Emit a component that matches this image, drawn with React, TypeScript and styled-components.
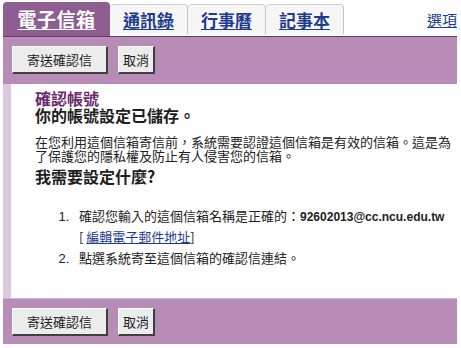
import React from 'react';
import styled, { createGlobalStyle } from 'styled-components';

const GlobalStyle = createGlobalStyle`
  html, body {
    margin: 0;
    padding: 0;
    background: #ffffff;
  }
  body {
    font-family: "Liberation Sans", "Noto Sans CJK TC", sans-serif;
    color: #222222;
  }
`;

const CJK = `"Noto Sans CJK TC", "Liberation Sans", sans-serif`;

const Frame = styled.div`
  width: 454px;
  margin-left: 3px;
`;

const TabBar = styled.div`
  display: flex;
  align-items: flex-start;
  height: 36px;
  padding-top: 2px;
  box-sizing: border-box;
`;

const Tab = styled.a<{ $active?: boolean }>`
  box-sizing: border-box;
  display: flex;
  align-items: center;
  justify-content: center;
  font-family: ${CJK};
  font-weight: 700;
  text-decoration: underline;
  text-underline-offset: 2px;
  cursor: pointer;
  border-radius: 4px 4px 0 0;

  ${props => props.$active ? `
    width: 107px;
    height: 34px;
    background: #8e5d91;
    color: #ffffff;
    font-size: 19px;
    letter-spacing: 0.5px;
    padding-bottom: 2px;
  ` : `
    width: 78px;
    height: 30px;
    margin-top: 2px;
    background: #f6f6f6;
    color: #1d3b8f;
    font-size: 17px;
    border-top: 1px solid #cfcfcf;
    border-right: 1px solid #c4c4c4;
  `}
`;

const Spacer = styled.div`
  flex: 1;
`;

const OptionsLink = styled.a`
  font-family: ${CJK};
  font-size: 15px;
  color: #1d3b8f;
  text-decoration: underline;
  margin-top: 7px;
  cursor: pointer;
`;

const Toolbar = styled.div<{ $top?: boolean }>`
  display: flex;
  align-items: center;
  gap: 10px;
  height: ${props => props.$top ? '48px' : '46px'};
  box-sizing: border-box;
  padding: 0 9px;
  background: #b78db7;
  ${props => props.$top
    ? `border-top: 1px solid #6d3a70; padding-bottom: 1px;`
    : `border-top: 1px solid #cdb6cd;`}
`;

const Button = styled.button<{ $wide?: boolean }>`
  height: 28px;
  width: ${props => props.$wide ? '96px' : '37px'};
  padding: 0;
  font-family: ${CJK};
  font-size: 13px;
  color: #222222;
  background: #ececec;
  border-style: solid;
  border-color: #ffffff #404040 #404040 #ffffff;
  border-width: 1px 2px 2px 1px;
  cursor: pointer;
`;

const Content = styled.div`
  border-left: 8px solid #dcc9dc;
  background: #ffffff;
  padding: 6px 0 0 24px;
  height: 214px;
  box-sizing: border-box;
`;

const Title = styled.h2<{ $accent?: boolean }>`
  margin: 0;
  font-family: ${CJK};
  font-size: 16px;
  line-height: 17px;
  font-weight: 700;
  color: ${props => props.$accent ? '#6b2a6e' : '#1e1e1e'};
`;

const Paragraph = styled.p`
  margin: 11px 0 5px;
  width: 426px;
  font-family: ${CJK};
  font-size: 13px;
  line-height: 14px;
  color: #222222;
`;

const StepList = styled.ol`
  margin: 21px 0 0;
  padding-left: 38px;
  font-size: 13px;
  line-height: 20px;

  li {
    padding-left: 6px;
  }
  li::marker {
    font-family: "Liberation Sans", sans-serif;
  }
`;

const StepLine = styled.span`
  white-space: nowrap;
  font-family: ${CJK};
`;

const Email = styled.b`
  font-family: "Liberation Sans", sans-serif;
  font-size: 12px;
  font-weight: 700;
`;

const EditLink = styled.a`
  color: #1d3b8f;
  text-decoration: underline;
  cursor: pointer;
`;

export default function App() {
  return (
    <>
      <GlobalStyle />
      <Frame>
        <TabBar>
          <Tab $active>電子信箱</Tab>
          <Tab>通訊錄</Tab>
          <Tab>行事曆</Tab>
          <Tab>記事本</Tab>
          <Spacer />
          <OptionsLink>選項</OptionsLink>
        </TabBar>
        <Toolbar $top>
          <Button $wide>寄送確認信</Button>
          <Button>取消</Button>
        </Toolbar>
        <Content>
          <Title $accent>確認帳號</Title>
          <Title>你的帳號設定已儲存。</Title>
          <Paragraph>
            在您利用這個信箱寄信前，系統需要認證這個信箱是有效的信箱。這是為了保護您的隱私權及防止有人侵害您的信箱。
          </Paragraph>
          <Title>我需要設定什麼?</Title>
          <StepList>
            <li>
              <StepLine>
                確認您輸入的這個信箱名稱是正確的：<Email>92602013@cc.ncu.edu.tw</Email>
              </StepLine>
              <br />
              <StepLine>[ <EditLink>編輯電子郵件地址</EditLink>]</StepLine>
            </li>
            <li>
              <StepLine>點選系統寄至這個信箱的確認信連結。</StepLine>
            </li>
          </StepList>
        </Content>
        <Toolbar>
          <Button $wide>寄送確認信</Button>
          <Button>取消</Button>
        </Toolbar>
      </Frame>
    </>
  );
}
